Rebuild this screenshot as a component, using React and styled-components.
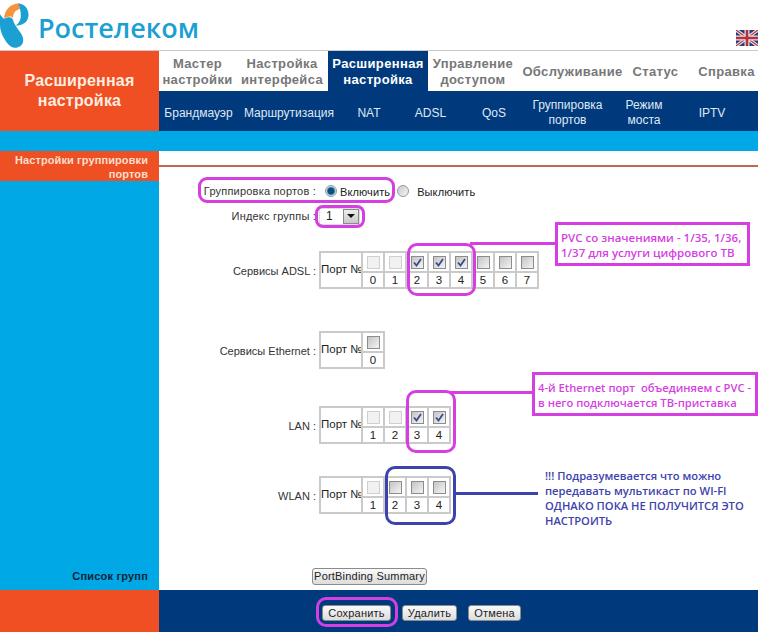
import React from "react";
import styled, { createGlobalStyle } from "styled-components";

const GlobalStyle = createGlobalStyle`
  html, body { margin: 0; padding: 0; background: #fff; }
  body { width: 758px; height: 632px; overflow: hidden; font-family: "Liberation Sans", Arial, sans-serif; }
`;

const Page = styled.div`
  position: relative;
  width: 758px;
  height: 632px;
  display: flex;
  flex-direction: column;
`;

const TopBar = styled.header`
  height: 50px;
  flex: none;
  display: flex;
  align-items: flex-start;
  justify-content: space-between;
  border-bottom: 1px solid #c9c9c9;
`;

const Brand = styled.div`
  display: flex;
  align-items: center;
  gap: 9px;
  height: 50px;
`;

const BrandName = styled.span`
  font-family: "Open Sans", sans-serif;
  font-weight: 600;
  font-size: 27px;
  color: #1c9fd2;
  margin-top: 4px;
`;

const Flag = styled.svg`
  width: 22px;
  height: 16px;
  margin-top: 30px;
`;

const NavArea = styled.div`
  flex: none;
  height: 80px;
  display: flex;
`;

const SectionTitle = styled.div`
  width: 159px;
  background: #f04f23;
  color: #fdeee0;
  font-size: 16px;
  font-weight: bold;
  letter-spacing: 0.2px;
  line-height: 20px;
  text-align: center;
  display: flex;
  align-items: center;
  justify-content: center;
`;

const NavColumn = styled.nav`
  flex: 1;
  display: flex;
  flex-direction: column;
`;

const TopNav = styled.div`
  height: 40px;
  display: grid;
  grid-template-columns: 77px 92px 100px 90px 109px 57px 74px;
`;

const TopItem = styled.div`
  box-sizing: border-box;
  display: flex;
  align-items: center;
  justify-content: center;
  padding: 2px 0 0 ${(p) => p.$pad || 0}px;
  text-align: center;
  font-size: 13px;
  font-weight: bold;
  line-height: 16px;
  letter-spacing: 0.35px;
  color: ${(p) => (p.$active ? "#fff" : "#777")};
  background: ${(p) => (p.$active ? "#003a7d" : "#fff")};
`;

const SubNav = styled.div`
  height: 40px;
  background: #003a7d;
  display: grid;
  grid-template-columns: 79px 102px 58px 65px 62px 85px 68px 68px;
`;

const SubItem = styled.div`
  box-sizing: border-box;
  display: flex;
  align-items: center;
  justify-content: center;
  padding-top: 4px;
  text-align: center;
  font-size: 12px;
  line-height: 15px;
  color: #dfe9f4;
`;

const Band = styled.div`
  flex: none;
  height: 20px;
  background: #00a8e6;
`;

const Main = styled.main`
  flex: 1;
  display: flex;
  min-height: 0;
`;

const Sidebar = styled.aside`
  width: 159px;
  background: #00a8e6;
  display: flex;
  flex-direction: column;
  justify-content: space-between;
`;

const SideActive = styled.div`
  height: 30px;
  box-sizing: border-box;
  padding: 2px 11px 0 0;
  background: #ee5024;
  color: #fbdfcd;
  font-size: 11px;
  font-weight: bold;
  letter-spacing: 0.1px;
  line-height: 14px;
  text-align: right;
`;

const SideLink = styled.div`
  padding: 0 11px 8px 0;
  color: #10243a;
  font-size: 11px;
  font-weight: bold;
  letter-spacing: 0.2px;
  text-align: right;
`;

const Content = styled.section`
  flex: 1;
  padding-top: 14px;
`;

const Divider = styled.div`
  height: 2px;
  background: #c0694a;
`;

const Row = styled.div`
  display: grid;
  grid-template-columns: 157px auto;
  justify-content: start;
  column-gap: 3px;
  align-items: center;
  margin-top: ${(p) => p.$top}px;
  min-height: ${(p) => p.$height || 22}px;
`;

const Label = styled.div`
  padding-top: ${(p) => p.$drop || 0}px;
  font-size: 11px;
  letter-spacing: ${(p) => p.$track || 0}px;
  color: #333;
  text-align: right;
`;

const RadioGroup = styled.div`
  display: flex;
  align-items: center;
  padding-top: 1px;
  font-size: 11px;
  letter-spacing: 0.1px;
  color: #222;
`;

const RadioDot = styled.span`
  box-sizing: border-box;
  width: 12px;
  height: 12px;
  border-radius: 50%;
  margin: -2px ${(p) => p.$gap}px 0 ${(p) => p.$left}px;
  border: 1px solid #8f9aa3;
  background: ${(p) =>
    p.$on
      ? "radial-gradient(circle, #0f4f7e 0 3px, #6fb0d8 4px, #e8eef2 5px)"
      : "linear-gradient(135deg, #c8c8c8, #f6f6f6)"};
`;

const Select = styled.div`
  box-sizing: border-box;
  width: 41px;
  height: 17px;
  padding-left: 6px;
  border: 1px solid #dcdcdc;
  display: flex;
  align-items: center;
  justify-content: space-between;
  font-size: 12px;
  color: #222;
`;

const SelectArrow = styled.span`
  box-sizing: border-box;
  width: 16px;
  height: 15px;
  background: linear-gradient(#eee, #c8c8c8);
  border: 1px solid #8a8a8a;
  display: flex;
  align-items: center;
  justify-content: center;
  &::after {
    content: "";
    border-left: 4px solid transparent;
    border-right: 4px solid transparent;
    border-top: 4px solid #111;
  }
`;

const PortTable = styled.div`
  display: grid;
  grid-template-columns: 42px repeat(${(p) => p.$count}, 22px);
  grid-template-rows: 20px 16px;
  width: max-content;
  border-top: 2px solid #cacaca;
  border-left: 2px solid #cacaca;
`;

const PortHead = styled.div`
  grid-row: 1 / span 2;
  box-sizing: border-box;
  padding-top: 10px;
  font-size: 11.5px;
  color: #222;
  white-space: nowrap;
  overflow: hidden;
  border-right: 2px solid #cacaca;
  border-bottom: 2px solid #cacaca;
`;

const PortCell = styled.div`
  box-sizing: border-box;
  display: flex;
  align-items: center;
  justify-content: center;
  font-size: 11.5px;
  color: #222;
  border-right: 2px solid #cacaca;
  border-bottom: 2px solid #cacaca;
`;

const CheckBox = styled.span`
  box-sizing: border-box;
  width: 13px;
  height: 13px;
  display: flex;
  border: 1px solid ${(p) => (p.$disabled ? "#d0d0d0" : "#8c8c8c")};
  background: ${(p) =>
    p.$disabled ? "#f1f1f1" : "linear-gradient(135deg, #c4c4c4, #f4f4f4)"};
`;

const CheckMark = styled.svg`
  width: 11px;
  height: 11px;
`;

const Button = styled.button`
  box-sizing: border-box;
  height: ${(p) => p.$height || 16}px;
  padding: 0;
  margin-left: ${(p) => p.$shift || 0}px;
  width: ${(p) => p.$width}px;
  font-family: "Liberation Sans", Arial, sans-serif;
  font-size: 11px;
  letter-spacing: 0.2px;
  white-space: nowrap;
  color: #222;
  background: linear-gradient(#fafafa, #dcdcdc);
  border: 1px solid #8b8b8b;
  border-radius: 3px;
`;

const Footer = styled.footer`
  flex: none;
  height: 42px;
  display: flex;
`;

const FooterSide = styled.div`
  width: 159px;
  background: #f04f23;
`;

const FooterBar = styled.div`
  flex: 1;
  background: #003a7d;
  display: flex;
  align-items: flex-start;
  gap: 11px;
  padding: 15px 0 0 163px;
`;

// Пометки поверх скриншота
const Ring = styled.div`
  position: absolute;
  box-sizing: border-box;
  left: ${(p) => p.$x}px;
  top: ${(p) => p.$y}px;
  width: ${(p) => p.$w}px;
  height: ${(p) => p.$h}px;
  border: 3px solid ${(p) => p.$color || "#d53fe2"};
  border-radius: ${(p) => p.$radius || 8}px;
`;

const Leader = styled.div`
  position: absolute;
  left: ${(p) => p.$x}px;
  top: ${(p) => p.$y}px;
  width: ${(p) => p.$w}px;
  height: 3px;
  background: ${(p) => p.$color || "#d53fe2"};
`;

const Callout = styled.div`
  position: absolute;
  box-sizing: border-box;
  left: ${(p) => p.$x}px;
  top: ${(p) => p.$y}px;
  width: ${(p) => p.$w}px;
  height: ${(p) => p.$h}px;
  padding: 5px 0 0 3px;
  background: #fff;
  border: 3px solid #d53fe2;
  color: #d53fe2;
  font-family: "Open Sans", sans-serif;
  font-weight: 600;
  font-size: ${(p) => p.$size}px;
  line-height: 15px;
  white-space: nowrap;
`;

const Note = styled.div`
  position: absolute;
  left: 545px;
  top: 468px;
  color: #3d43ad;
  font-family: "Open Sans", sans-serif;
  font-weight: 600;
  font-size: 11.2px;
  line-height: 15px;
  white-space: nowrap;
`;

const Logo = () => (
  <svg width="29" height="48" viewBox="0 0 29 48">
    <path d="M19 2.5C10 2.5 4.5 9 4 18C8 15 11 15 13 17C13 12.5 15 9 20 8Z" fill="#f6933b" />
    <path
      d="M18 2.5C24.5 2.5 28.8 8 28.5 14.5C28.2 20.5 23 25 15.5 24.5C19 22.5 21 18.5 20.8 14C20.6 10 20 6 18 2.5Z"
      fill="#1c9fd2"
    />
    <path
      d="M0 13.5L4 18C8 15.5 12 15.5 13 19C14 23 17 27 20 31C24 36 24.5 42 20.5 45C16 48 11 47 8 43C3 37 0 30 0 24Z"
      fill="#1c9fd2"
    />
  </svg>
);

const UnionJack = () => (
  <Flag viewBox="0 0 22 16">
    <rect width="22" height="16" fill="#2b3a78" />
    <path d="M0 0L22 16M22 0L0 16" stroke="#e9e4e6" strokeWidth="3.4" />
    <path d="M0 0L22 16M22 0L0 16" stroke="#b5303f" strokeWidth="1.1" />
    <path d="M11 0V16M0 8H22" stroke="#e9e4e6" strokeWidth="5" />
    <path d="M11 0V16M0 8H22" stroke="#b5303f" strokeWidth="2.6" />
  </Flag>
);

const topItems = [
  { parts: ["Мастер", "настройки"] },
  { parts: ["Настройка", "интерфейса"] },
  { parts: ["Расширенная", "настройка"], active: true },
  { parts: ["Управление", "доступом"] },
  { parts: ["Обслуживание"] },
  { parts: ["Статус"] },
  { parts: ["Справка"], pad: 11 },
];

const subItems = [
  ["Брандмауэр"],
  ["Маршрутизация"],
  ["NAT"],
  ["ADSL"],
  ["QoS"],
  ["Группировка", "портов"],
  ["Режим", "моста"],
  ["IPTV"],
];

const lines = (parts) =>
  parts.map((t, i) => (
    <React.Fragment key={t}>
      {i > 0 && <br />}
      {t}
    </React.Fragment>
  ));

// d = неактивный, c = отмечен, u = пустой
const Ports = ({ numbers, states }) => (
  <PortTable $count={numbers.length}>
    <PortHead>Порт №</PortHead>
    {numbers.map((n, i) => (
      <PortCell key={n}>
        <CheckBox $disabled={states[i] === "d"}>
          {states[i] === "c" && (
            <CheckMark viewBox="0 0 11 11">
              <path d="M2 5.5L4.5 8.5L9 2" fill="none" stroke="#3a4a8c" strokeWidth="1.8" />
            </CheckMark>
          )}
        </CheckBox>
      </PortCell>
    ))}
    {numbers.map((n) => (
      <PortCell key={n}>{n}</PortCell>
    ))}
  </PortTable>
);

export default function App() {
  return (
    <Page>
      <GlobalStyle />
      <TopBar>
        <Brand>
          <Logo />
          <BrandName>Ростелеком</BrandName>
        </Brand>
        <UnionJack />
      </TopBar>
      <NavArea>
        <SectionTitle>
          Расширенная
          <br />
          настройка
        </SectionTitle>
        <NavColumn>
          <TopNav>
            {topItems.map((item) => (
              <TopItem key={item.parts[0]} $active={item.active} $pad={item.pad}>
                <span>{lines(item.parts)}</span>
              </TopItem>
            ))}
          </TopNav>
          <SubNav>
            {subItems.map((parts) => (
              <SubItem key={parts[0]}>
                <span>{lines(parts)}</span>
              </SubItem>
            ))}
          </SubNav>
        </NavColumn>
      </NavArea>
      <Band />
      <Main>
        <Sidebar>
          <SideActive>
            Настройки группировки
            <br />
            портов
          </SideActive>
          <SideLink>Список групп</SideLink>
        </Sidebar>
        <Content>
          <Divider />
          <Row $top={13}>
            <Label $track={0.2}>Группировка портов :</Label>
            <RadioGroup>
              <RadioDot $on $left={6} $gap={3} />
              Включить
              <RadioDot $left={7} $gap={8} />
              Выключить
            </RadioGroup>
          </Row>
          <Row $top={3}>
            <Label $track={0.2}>Индекс группы :</Label>
            <Select>
              1
              <SelectArrow />
            </Select>
          </Row>
          <Row $top={24} $height={38}>
            <Label $drop={2}>Сервисы ADSL :</Label>
            <Ports numbers={[0, 1, 2, 3, 4, 5, 6, 7]} states="ddcccuuu" />
          </Row>
          <Row $top={42} $height={38}>
            <Label $drop={2}>Сервисы Ethernet :</Label>
            <Ports numbers={[0]} states="u" />
          </Row>
          <Row $top={37} $height={38}>
            <Label $drop={2}>LAN :</Label>
            <Ports numbers={[1, 2, 3, 4]} states="ddcc" />
          </Row>
          <Row $top={32} $height={38}>
            <Label $drop={2}>WLAN :</Label>
            <Ports numbers={[1, 2, 3, 4]} states="duuu" />
          </Row>
          <Row $top={53} $height={18}>
            <span />
            <Button $width={115} $height={17} $shift={-7}>
              PortBinding Summary
            </Button>
          </Row>
        </Content>
      </Main>
      <Footer>
        <FooterSide />
        <FooterBar>
          <Button $width={69}>Сохранить</Button>
          <Button $width={55}>Удалить</Button>
          <Button $width={53}>Отмена</Button>
        </FooterBar>
      </Footer>

      <Ring $x={198} $y={177} $w={197} $h={26} $radius={9} />
      <Ring $x={315} $y={205} $w={50} $h={23} />
      <Ring $x={407} $y={243} $w={69} $h={53} $radius={10} />
      <Leader $x={470} $y={242} $w={86} />
      <Callout $x={555} $y={222} $w={195} $h={44} $size={11.5}>
        PVC со значениями - 1/35, 1/36,
        <br />
        1/37 для услуги цифрового ТВ
      </Callout>
      <Ring $x={406} $y={390} $w={50} $h={63} $radius={10} />
      <Leader $x={450} $y={391} $w={83} />
      <Callout $x={532} $y={372} $w={226} $h={44} $size={11.2}>
        4-й Ethernet порт&nbsp; объединяем с PVC -
        <br />в него подключается ТВ-приставка
      </Callout>
      <Ring $x={385} $y={466} $w={71} $h={59} $color="#3d43ad" $radius={10} />
      <Leader $x={456} $y={492} $w={82} $color="#3d43ad" />
      <Note>
        !!! Подразумевается что можно
        <br />
        передавать мультикаст по WI-FI
        <br />
        ОДНАКО ПОКА НЕ ПОЛУЧИТСЯ ЭТО
        <br />
        НАСТРОИТЬ
      </Note>
      <Ring $x={316} $y={597} $w={82} $h={30} $radius={10} />
    </Page>
  );
}
